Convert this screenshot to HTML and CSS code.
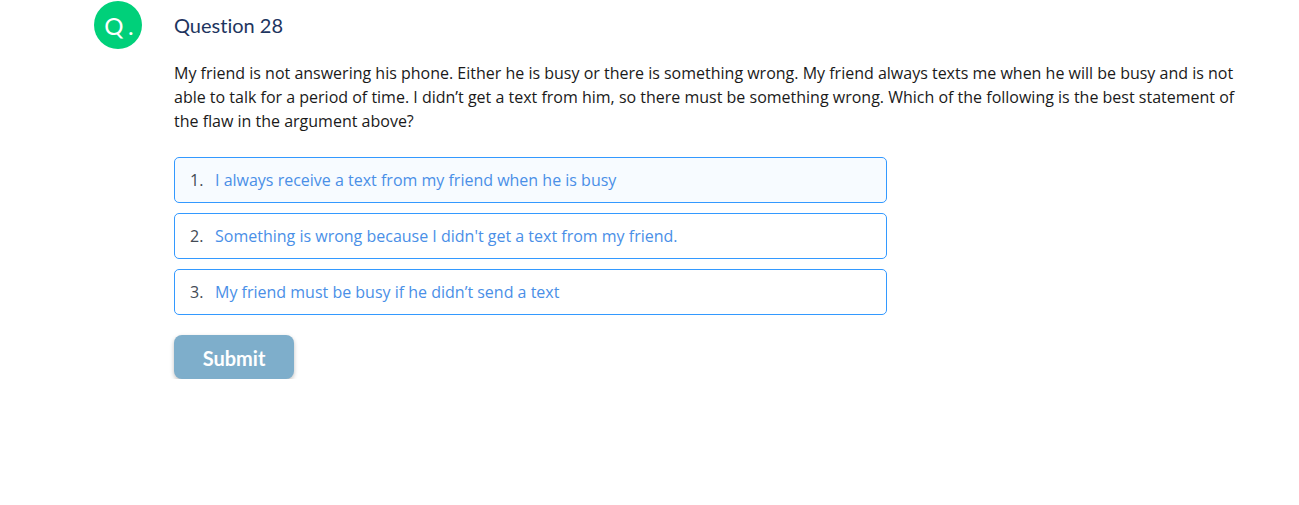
FILE: index.html
```html
<!DOCTYPE html>
<html>
<head>
<meta charset="utf-8">
<link rel="stylesheet" href="styles.css">
</head>
<body>
<div class="page">
  <div class="header">
    <div class="badge">Q.</div>
    <h1 class="title">Question 28</h1>
  </div>
  <div class="content">
    <p class="prompt">My friend is not answering his phone. Either he is busy or there is something wrong. My friend always texts me when he will be busy and is not able to talk for a period of time. I didn’t get a text from him, so there must be something wrong. Which of the following is the best statement of the flaw in the argument above?</p>
    <ol class="options">
      <li class="option option-active"><span class="num">1.</span><span class="label">I always receive a text from my friend when he is busy</span></li>
      <li class="option"><span class="num">2.</span><span class="label">Something is wrong because I didn't get a text from my friend.</span></li>
      <li class="option"><span class="num">3.</span><span class="label">My friend must be busy if he didn’t send a text</span></li>
    </ol>
    <button class="submit">Submit</button>
  </div>
</div>
</body>
</html>
```
FILE: styles.css
```css
html, body {
  margin: 0;
  padding: 0;
  background: #ffffff;
}
.page {
  padding: 1px 0 0 94px;
  width: 1160px;
}
.header {
  display: flex;
  align-items: center;
  gap: 32px;
  height: 48px;
}
.badge {
  width: 48px;
  height: 48px;
  border-radius: 50%;
  background: #00d07a;
  color: #ffffff;
  font-family: Lato, sans-serif;
  font-size: 24px;
  display: flex;
  align-items: center;
  justify-content: center;
  letter-spacing: 5px;
  padding-left: 7px;
  box-sizing: border-box;
}
.title {
  margin: 0;
  font-family: Lato, sans-serif;
  font-weight: 400;
  font-size: 20px;
  color: #1e3560;
  font-variant-ligatures: none;
}
.content {
  margin-left: 80px;
}
.prompt {
  margin: 12px 0 0 0;
  font-family: "Open Sans", sans-serif;
  font-size: 16px;
  line-height: 24px;
  color: #1a1a1a;
}
.options {
  list-style: none;
  margin: 24px 0 0 0;
  padding: 0;
  width: 713px;
  display: flex;
  flex-direction: column;
  gap: 10px;
}
.option {
  box-sizing: border-box;
  height: 46px;
  border: 1px solid #3399ff;
  border-radius: 5px;
  display: flex;
  align-items: center;
  padding-left: 15px;
  font-family: "Open Sans", sans-serif;
  font-size: 16px;
}
.option-active {
  background: #f7fbff;
}
.num {
  color: #444b55;
  width: 25px;
}
.label {
  color: #4a8fe7;
}
.submit {
  margin-top: 20px;
  width: 120px;
  height: 44px;
  border: none;
  border-radius: 8px;
  background: #7eaecb;
  color: #ffffff;
  font-family: Lato, sans-serif;
  font-weight: 700;
  font-size: 20px;
  padding-top: 2px;
  font-variant-ligatures: none;
  box-shadow: 0 2px 4px rgba(0,0,0,0.25);
}
```
